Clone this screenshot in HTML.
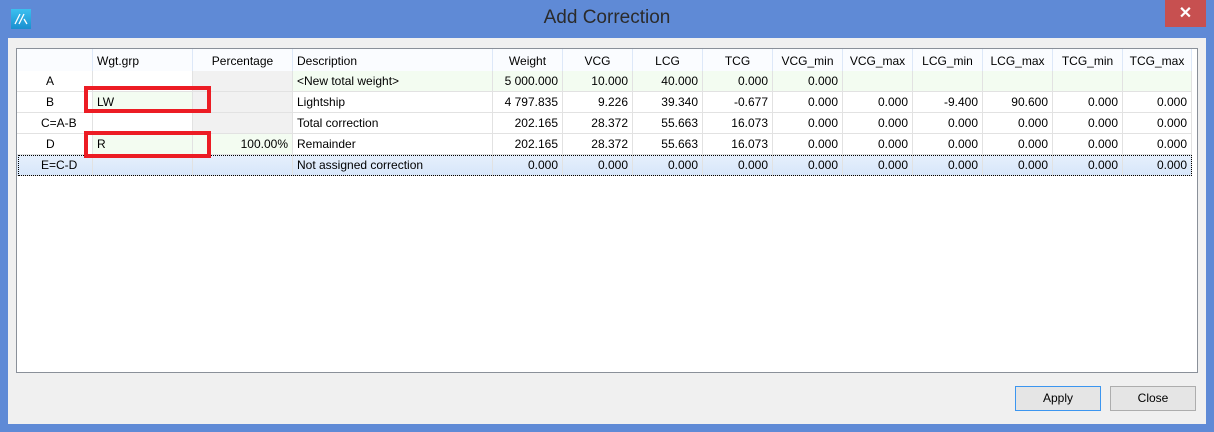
<!DOCTYPE html>
<html><head><style>
*{margin:0;padding:0;box-sizing:border-box}
body{width:1214px;height:432px;background:#5f8ad6;position:relative;overflow:hidden;font-family:"Liberation Sans",sans-serif;font-size:12px;color:#000}
.client{position:absolute;left:8px;top:38px;width:1198px;height:386px;background:#f0f0f0}
.grid{position:absolute;left:16px;top:48px;width:1182px;height:325px;background:#fff;border:1px solid #8a9099}
.c{position:absolute;height:21px;line-height:20px;padding:0 4px;white-space:nowrap;border-right:1px solid #e2e2e2;border-bottom:1px solid #e2e2e2;overflow:hidden}
.r{text-align:right}
.ctr{text-align:center}
.h{border-right:1px solid #dde8f8;border-bottom:none;background:#fafcff}
.g{background:#f3fcf1}
.gr{background:#f1f1f1}
.sel{background:linear-gradient(#e6f0fc,#d7e6fa)}
.btn{position:absolute;top:386px;height:25px;width:86px;background:#e5e5e5;border:1px solid #adadad;text-align:center;line-height:23px;font-size:12px}
.red{position:absolute;border:4px solid #ec1c24;width:127px;height:27px}
</style></head><body>
<div style="position:absolute;left:11px;top:9px;width:20px;height:20px;background:linear-gradient(#3bc0f0,#1a8fd0)"><svg width="20" height="20"><path d="M4 15 L9 5 M8 15 L13 5 M13 10 L16 15" stroke="#fff" stroke-width="1.3" fill="none"/></svg></div>
<div style="position:absolute;left:0;width:1214px;top:7px;text-align:center;font-size:19px;color:#2b2b2b;">Add Correction</div>
<div style="position:absolute;left:1165px;top:0;width:41px;height:27px;background:#c75050;color:#fff;text-align:center;line-height:27px;font-size:16px;font-weight:bold">✕</div>
<div class="client"></div>
<div class="grid" id="g"></div>
<div class="btn" style="left:1015px;border-color:#3c96f0">Apply</div>
<div class="btn" style="left:1110px">Close</div>
<script>
var cols=[[0,76],[76,100],[176,100],[276,200],[476,70],[546,70],[616,70],[686,70],[756,70],[826,70],[896,70],[966,70],[1036,70],[1106,69]];
var hdr=["","Wgt.grp","Percentage","Description","Weight","VCG","LCG","TCG","VCG_min","VCG_max","LCG_min","LCG_max","TCG_min","TCG_max"];
var rows=[
["A","","","<New total weight>","5 000.000","10.000","40.000","0.000","0.000","","","","",""],
["B","LW","","Lightship","4 797.835","9.226","39.340","-0.677","0.000","0.000","-9.400","90.600","0.000","0.000"],
["C=A-B","","","Total correction","202.165","28.372","55.663","16.073","0.000","0.000","0.000","0.000","0.000","0.000"],
["D","R","100.00%","Remainder","202.165","28.372","55.663","16.073","0.000","0.000","0.000","0.000","0.000","0.000"],
["E=C-D","","","Not assigned correction","0.000","0.000","0.000","0.000","0.000","0.000","0.000","0.000","0.000","0.000"]];
var h="";
function esc(s){return s.replace(/</g,"&lt;").replace(/>/g,"&gt;")}
for(var i=0;i<14;i++){
h+='<div class="c h '+(i==2||i>=4?"ctr":"")+'" style="left:'+cols[i][0]+'px;top:0;width:'+cols[i][1]+'px;height:22px;line-height:24px;'+(i==1?'padding-left:4px;':'')+'">'+hdr[i]+'</div>';}
for(var r=0;r<5;r++){for(var i=0;i<14;i++){
var cls="c";if(i>=4||i==2)cls+=" r";
var st='left:'+cols[i][0]+'px;top:'+(22+r*21)+'px;width:'+cols[i][1]+'px;';
if(i==1)st+='padding-left:4px;';
if(r==4)cls+=" sel";
else if(r==0){if(i>=3)cls+=" g";if(i==2)cls+=" gr";}
else if(r==1){if(i==1)cls+=" g";if(i==2)cls+=" gr";}
else if(r==2){if(i==2)cls+=" gr";}
else if(r==3){if(i==1||i==2)cls+=" g";}
if(i==0)st+='padding-left:'+(r==2||r==4?24:29)+'px;';
h+='<div class="'+cls+'" style="'+st+'">'+esc(rows[r][i])+'</div>';}}
h+='<div style="position:absolute;left:1px;top:106px;width:1174px;height:21px;border:1px dotted #000"></div>';
document.getElementById("g").innerHTML=h;
</script>
<div class="red" style="left:84px;top:86px"></div>
<div class="red" style="left:84px;top:131px"></div>
</body></html>
